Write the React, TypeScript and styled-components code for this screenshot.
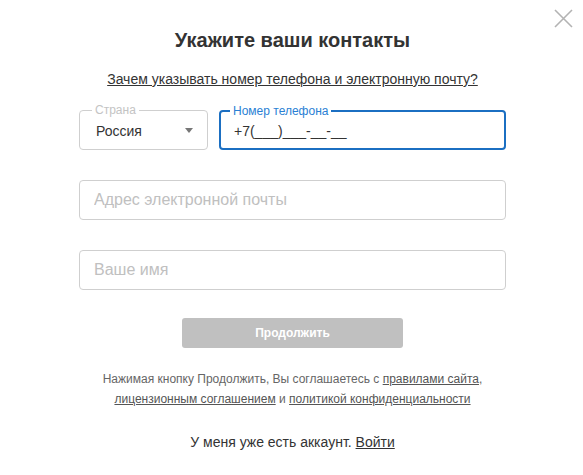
import styled, { createGlobalStyle } from "styled-components";

const GlobalStyle = createGlobalStyle`
    body {
        margin: 0;
        background: #fff;
        font-family: "Liberation Sans", Arial, sans-serif;
        color: #333;
    }
`

const Modal = styled.div`
    position: relative;
    width: 583px;
    height: 475px;
    box-sizing: border-box;
    padding-top: 27px;
    padding-left: 2px;
    display: flex;
    flex-direction: column;
    align-items: center;
`

const CloseButton = styled.button`
    position: absolute;
    top: 9px;
    right: 10px;
    width: 19px;
    height: 19px;
    padding: 0;
    border: none;
    background: none;
    cursor: pointer;
`

const Title = styled.h2`
    margin: 0;
    font-size: 20px;
    line-height: 26px;
    font-weight: 700;
    color: #333;
`

const WhyLink = styled.a`
    margin-top: 18px;
    font-size: 14px;
    line-height: 17px;
    color: #333;
    text-decoration: underline;
`

const Form = styled.form`
    width: 427px;
    margin-top: 22px;
    display: flex;
    flex-direction: column;
    gap: 30px;
`

const PhoneRow = styled.div`
    display: flex;
    gap: 11px;
`

const Field = styled.div<{ $active?: boolean; $width?: number }>`
    position: relative;
    box-sizing: border-box;
    height: 40px;
    flex: ${p => (p.$width ? `0 0 ${p.$width}px` : "1")};
    border: ${p => (p.$active ? "2px solid #1b6fc2" : "1px solid #cfcfcf")};
    border-radius: 4px;
    display: flex;
    align-items: center;
    padding: 0 ${p => (p.$active ? 13 : 14)}px 0 ${p => (p.$active ? 13 : 16)}px;
`

const FloatLabel = styled.span<{ $active?: boolean }>`
    position: absolute;
    top: -8px;
    left: ${p => (p.$active ? 9 : 12)}px;
    padding: 0 3px;
    background: #fff;
    font-size: 12px;
    line-height: 14px;
    color: ${p => (p.$active ? "#2a7fd4" : "#c4c4c4")};
`

const Value = styled.span`
    padding-top: 2px;
    font-size: 14px;
    color: #333;
`

const Caret = styled.span`
    margin-left: auto;
    width: 0;
    height: 0;
    border-left: 4px solid transparent;
    border-right: 4px solid transparent;
    border-top: 5px solid #777;
`

const Input = styled.input`
    width: 100%;
    border: none;
    outline: none;
    padding: 0;
    font-family: inherit;
    font-size: 16px;
    color: #333;
    background: transparent;

    &::placeholder {
        color: #c0c0c0;
    }
`

const TextField = styled(Field)`
    flex: none;
    padding: 0 13px 0 14px;
`

const SubmitButton = styled.button`
    align-self: center;
    width: 221px;
    height: 30px;
    margin-top: -2px;
    border: none;
    border-radius: 3px;
    background: #c0c0c0;
    color: #fff;
    font-family: inherit;
    font-size: 12px;
    font-weight: 700;
`

const Terms = styled.p`
    margin: 21px 0 0;
    font-size: 12px;
    line-height: 20px;
    color: #666;
    text-align: center;
`

const TermsLink = styled.a`
    color: #555;
    text-decoration: underline;
`

const Login = styled.p`
    margin: 24px 0 0;
    font-size: 14px;
    line-height: 18px;
    color: #333;
`

const LoginLink = styled.a`
    color: #333;
    text-decoration: underline;
`

export default function App() {
    return (
        <>
            <GlobalStyle />
            <Modal>
                <CloseButton aria-label="Закрыть">
                    <svg width="19" height="19" viewBox="0 0 19 19">
                        <path d="M1 1 L18 18 M18 1 L1 18" stroke="#b3b3b3" strokeWidth="1.6" />
                    </svg>
                </CloseButton>
                <Title>Укажите ваши контакты</Title>
                <WhyLink href="#">Зачем указывать номер телефона и электронную почту?</WhyLink>
                <Form onSubmit={e => e.preventDefault()}>
                    <PhoneRow>
                        <Field $width={129}>
                            <FloatLabel>Страна</FloatLabel>
                            <Value>Россия</Value>
                            <Caret />
                        </Field>
                        <Field $active>
                            <FloatLabel $active>Номер телефона</FloatLabel>
                            <Value>+7(___)___-__-__</Value>
                        </Field>
                    </PhoneRow>
                    <TextField>
                        <Input placeholder="Адрес электронной почты" />
                    </TextField>
                    <TextField>
                        <Input placeholder="Ваше имя" />
                    </TextField>
                    <SubmitButton type="submit">Продолжить</SubmitButton>
                </Form>
                <Terms>
                    Нажимая кнопку Продолжить, Вы соглашаетесь с <TermsLink href="#">правилами сайта</TermsLink>,
                    <br />
                    <TermsLink href="#">лицензионным соглашением</TermsLink> и{" "}
                    <TermsLink href="#">политикой конфиденциальности</TermsLink>
                </Terms>
                <Login>
                    У меня уже есть аккаунт. <LoginLink href="#">Войти</LoginLink>
                </Login>
            </Modal>
        </>
    );
}
